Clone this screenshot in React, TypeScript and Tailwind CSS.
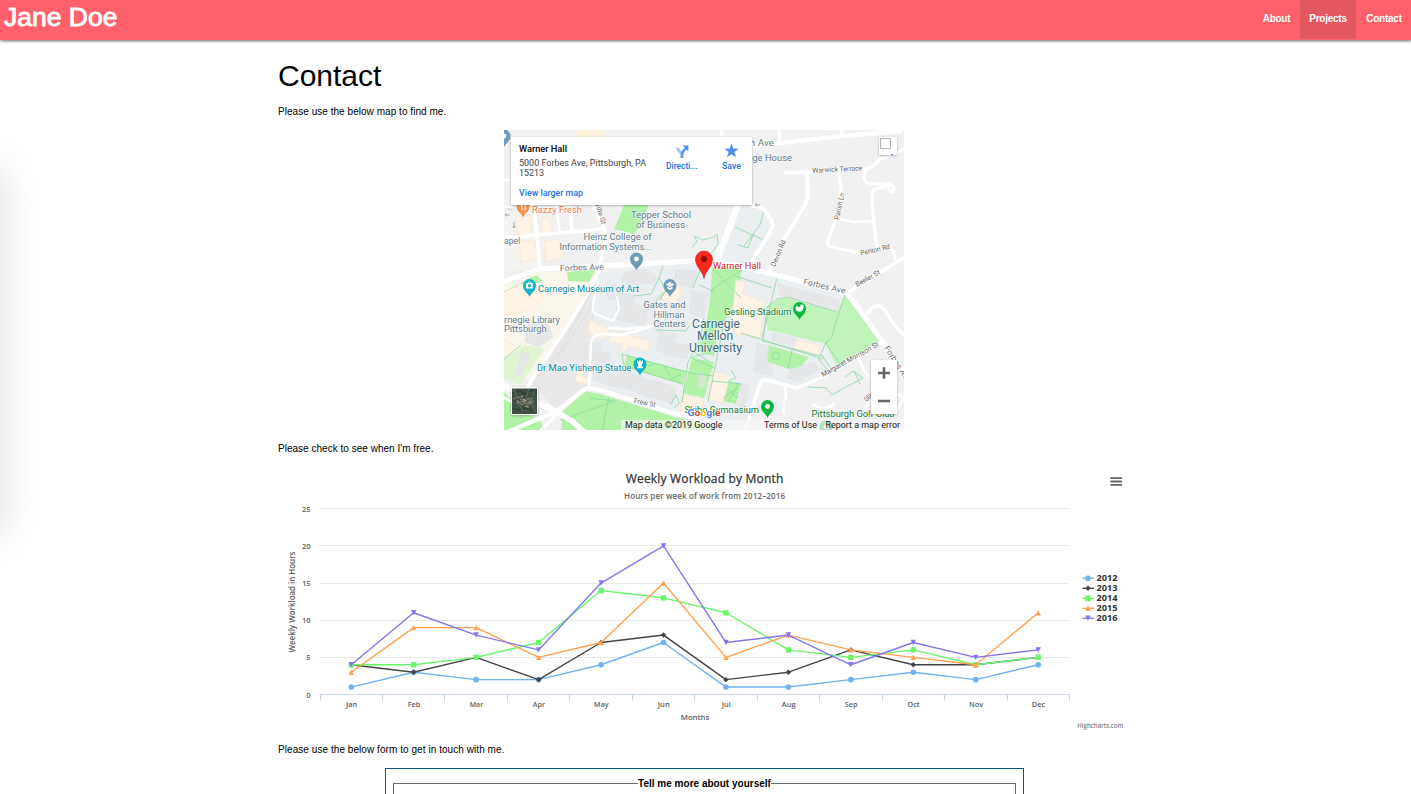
import React from "react";

const MAP_FONT = "Roboto, 'Liberation Sans', sans-serif";
const CHART_FONT = "'Open Sans', 'Noto Sans', sans-serif";

type LabelProps = {
  x: number;
  y: number;
  w: number;
  s?: number;
  fill?: string;
  weight?: number;
  rotate?: number;
  halo?: string;
  children: string;
};

function Label({ x, y, w, s = 9.2, fill = "#5f7c8d", weight = 400, rotate = 0, halo = "#ffffff", children }: LabelProps) {
  return (
    <text
      x={x}
      y={y}
      fontSize={s}
      fill={fill}
      fontWeight={weight}
      fontFamily={MAP_FONT}
      textLength={w}
      lengthAdjust="spacingAndGlyphs"
      transform={rotate ? `rotate(${rotate} ${x} ${y})` : undefined}
      stroke={halo}
      strokeWidth={halo === "none" ? 0 : 1.4}
      strokeOpacity={0.6}
      paintOrder="stroke"
    >
      {children}
    </text>
  );
}

function Pin({ x, y, color, children }: { x: number; y: number; color: string; children?: React.ReactNode }) {
  return (
    <g transform={`translate(${x} ${y})`}>
      <path d="M0 10.5C-.8 7 -6.5 4.5 -6.5 -1A6.5 6.5 0 0 1 6.5 -1C6.5 4.5 .8 7 0 10.5Z" fill={color} />
      {children ?? <circle cx="0" cy="-1" r="2.4" fill="#fff" />}
    </g>
  );
}

const roads: [string, number][] = [
  ["M503 282L539 269L600 266L700 260.5L735 265L780 276L847 293L882 341L905 374", 5],
  ["M847 293L873 277L905 257", 3.8],
  ["M740 147L780 143L843 136L900 131", 4.6],
  ["M843 136L841 129M780 143L779 129M722 137L721 129", 3],
  ["M785 173L867 169Q873 168 880 159L905 149", 3.4],
  ["M807 173L808 194Q808 199 805 205L783 241L770 271", 4],
  ["M838 169L841 189L841 206L828 240Q826 246 832 247L860 253L890 248Q896 252 895 259", 3],
  ["M840 219L855 222L874 221", 2.4],
  ["M877 248L872 206L872 195Q872 189 880 188L888 186", 3],
  ["M868 167Q860 177 867 183L880 184L890 184Q896 187 893 192Q888 192 889 187", 2.8],
  ["M738 205L717 260", 6.4],
  ["M752 206Q761 206 765 211L772 221Q774 226 770 232L760 249Q755 255 752 262", 3.6],
  ["M503 238L605 229M534 206L540 270M570 206L572 231", 3.4],
  ["M503 180L512 180M503 207L512 207M556 206L560 234", 2.6],
  ["M592 204L605 230L605 240L599 271L590 290L567 327L533 378L524 393", 3.6],
  ["M598 280L593 305Q591 313 598 315L613 321L619 309L617 297", 2.2],
  ["M503 385L524 397L557 412L572 421L583 431", 5.5],
  ["M510 431L557 411L585 389Q591 387 600 390L673 413L720 424", 4.2],
  ["M589 387L591 342Q591 337 600 334L621 335L640 330L652 326L627 329L609 328", 2.6],
  ["M745 431L760 383Q761 379 767 380L797 388L825 376L880 343", 3.4],
  ["M785 386L786 397L783 403L784 413", 2.6],
  ["M857 355L867 376M866 315L872 308Q879 303 884 309L894 325L905 336", 3],
  ["M866 408L870 396Q885 389 904 397L895 414M813 404Q824 413 834 404", 2.4],
  ["M540 431L558 413L548 405M503 397L512 402", 3],
];

const greens = [
  "624,205 649,205 635,234 614,229",
  "567,272 596,269 589,282 568,281",
  "503,292 536,275 543,281 512,291 503,300",
  "503,391 512,400 520,411 540,420 545,431 503,431",
  "585,391 600,394 675,417 710,426 712,431 561,431 563,411",
  "712,268 742,268 740,281 731,312 717,330 714,356 698,352 707,318 711,292",
  "692,358 714,362 704,398 683,393",
  "627,355 686,371 683,385 624,366",
  "729,381 741,384 736,404 723,401",
  "768,345 809,357 801,367 790,369 767,362",
];

const creams = [
  "503,293 520,284 536,287 543,296 534,309 512,314 503,315",
  "516,217 530,216 532,234 518,235",
  "541,219 549,217 553,232 543,234",
  "519,242 534,240 538,258 521,262",
  "545,241 558,239 565,257 545,262",
  "590,320 609,329 607,337 600,339 588,332",
  "612,331 651,341 648,351 628,346 626,351 621,349 623,344 608,341",
  "663,287 678,285 682,294 675,304 661,299",
  "577,369 583,371 582,377 590,378 588,384 575,382",
  "736,280 745,282 743,294 765,302 760,338 741,333 740,338 731,326",
  "797,340 820,345 818,354 795,348",
  "713,371 730,376 723,403 708,399",
  "684,395 704,399 701,417 680,411",
  "503,338 515,346 510,354 503,356",
];

const buildings = [
  "625,272 644,269 656,275 655,283 628,285 621,280",
  "616,292 634,296 634,304 648,309 645,326 616,319",
  "606,286 615,284 615,300 608,299",
  "586,343 600,344 602,352 611,354 610,364 584,359",
  "594,363 609,367 607,373 617,377 615,387 593,380",
  "618,370 634,373 646,380 660,382 676,388 673,404 646,396 626,388 616,386",
  "660,332 676,334 674,343 690,345 687,359 668,355 656,350",
  "675,270 697,271 692,288 676,284",
  "691,290 709,294 704,318 690,313",
  "529,321 549,326 553,337 539,347 525,342",
  "522,352 530,355 521,376 515,374",
  "778,284 839,300 837,312 780,296",
  "774,333 795,339 793,346 772,341",
  "757,343 769,347 767,362 773,368 772,376 754,371",
  "790,370 815,362 818,370 799,381 787,378",
  "742,384 750,386 743,408 738,406",
];

function CampusMap() {
  return (
    <svg viewBox="504 130 400 300" className="block h-[300px] w-[400px]" role="img">
      <rect x="504" y="130" width="400" height="300" fill="#f1f1f1" />
      <polygon points="504,284 540,272 596,270 590,289 566,327 531,380 504,377" fill="#fbf6ec" />
      <polygon points="504,215 532,207 545,268 504,270" fill="#f5f3ef" />
      <polygon points="525,345 545,349 520,385 504,378 504,358 512,354" fill="#e2f5d3" />
      <polygon points="596,280 592,302 598,316 591,342 588,387 557,411 532,384 568,326" fill="#e9e9ea" />
      <polygon points="600,272 700,263 720,260 738,208 756,206 770,224 764,252 757,268 845,295 838,345 860,356 797,386 762,379 745,430 715,422 590,388 591,342" fill="#ebeff2" />
      <polygon points="766,316 767,307 777,300 788,297 837,311 845,295 882,341 836,365 826,344 768,330" fill="#bff3b9" />
      {greens.map((p) => (
        <polygon key={p} points={p} fill="#b2f2a7" />
      ))}
      {buildings.map((p) => (
        <polygon key={p} points={p} fill="#e5e7e9" stroke="#dee1e3" strokeWidth=".5" />
      ))}
      {creams.map((p) => (
        <polygon key={p} points={p} fill="#fef3e5" stroke="#f9e3cb" strokeWidth=".6" />
      ))}
      <rect x="698" y="373.500" width="8" height="14" rx="1" fill="#d5e6d0" />
      <rect x="578" y="130" width="26" height="7" fill="#fdf1dc" />
      <g fill="none" stroke="#8bd8a2" strokeWidth=".8">
        <path d="M735 227L764 240M764 210L760 225L744 246M753 235L748 248L738 245" />
        <path d="M694 236L703 240L714 237L717 234L718 244L712 252M692 248L697 241L694 236M700 270L693 288" />
        <path d="M663 266L659 278L651 294L634 296M659 278L666 290L654 303M672 281L660 300" />
        <path d="M712 268L741 298M742 270L714 288L711 292M735 276L772 288M699 285L715 292" />
        <path d="M704 318L700 340L688 362L682 402M725 318L714 372L708 402" />
        <path d="M655 330L686 331L689 326" />
        <path d="M622 354L624 366L683 384M622 354L690 373L714 376M636 358L648 366L655 364M664 367L672 379L681 374" />
        <path d="M766 316L767 307L777 299L788 297M766 316L763 341L820 356L827 340M777 278L762 338M788 297L837 312M845 295L835 325L832 337L826 344L841 365M741 333L817 357M817 357L830 373M823 357L832 370M788 369L792 350" />
        <path d="M712 381L742 384M728 390L738 398M723 398L738 388M728 402L739 383M731 370L736 378L728 381" />
        <path d="M808 387L826 388L832 395L846 387L863 378L853 371L845 377M854 371L860 384" />
        <path d="M512 210L503 206M521 345L503 360M609 397L605 415L603 430M590 398L615 401L560 420M670 405L676 395L679 403L674 408" />
        <path d="M690 358L711 352M692 358L714 368M694 352L710 362" />
      </g>
      <g fill="none" stroke="#8bd8a2" strokeWidth=".8">
        <circle cx="776" cy="356" r="4" />
        <circle cx="821" cy="357" r="2" />
      </g>
      <g fill="none" stroke="#dadadc" strokeWidth=".7">
        <path d="M600 274L592 290L560 352L531 384M596 300L560 355L535 385" />
      </g>
      {roads.map(([d, w]) => (
        <path key={d} d={d} fill="none" stroke="#ffffff" strokeWidth={w} strokeLinejoin="round" strokeLinecap="round" />
      ))}
      <path d="M505 215h5m-5 0l2-1.5m-2 1.5l2 1.5M514 222v6m0 0l-1.500-2m1.500 2l1.500-2M755 205h5m-5 0l2-1.500m-2 1.500l2 1.500" fill="none" stroke="#9a9aa5" strokeWidth=".8" />

      <Pin x={504} y={137} color="#6f9cb3" />
      <Pin x={523} y={207} color="#f5924e">
        <path d="M-2.300 -4.500V-1.500M-1 -4.500V3M-2.300 -1.500H0M2.200 -4.500V3" stroke="#fff" strokeWidth="1" />
      </Pin>
      <Label x={532} y={213} w={50} fill="#ee8147">Razzy Fresh</Label>
      <Label x={631} y={218} w={60}>Tepper School</Label>
      <Label x={636} y={227.5} w={49}>of Business</Label>
      <Label x={583.5} y={240} w={68}>Heinz College of</Label>
      <Label x={559.5} y={249.5} w={92}>Information Systems...</Label>
      <Label x={504} y={244} w={16}>apel</Label>
      <Label x={560} y={271} w={44} s={8} fill="#757575" rotate={-2}>Forbes Ave</Label>
      <Label x={595} y={204} w={22} s={6.8} fill="#777" rotate={72}>ville St</Label>
      <Pin x={636.5} y={260} color="#6f9cb3" />
      <Pin x={529.5} y={286.5} color="#12b5c9">
        <path d="M-3.400 -3.500h6.800v5.500h-6.800z" fill="#fff" />
        <circle cy="-.8" r="1.600" fill="#12b5c9" />
        <path d="M-1.500 -3.300L0 -5.300L1.500 -3.300" stroke="#fff" fill="none" strokeWidth=".7" />
      </Pin>
      <Label x={538} y={292} w={101} fill="#068b9e">Carnegie Museum of Art</Label>
      <Pin x={670} y={286.5} color="#6f9cb3">
        <path d="M0 -4.500L4.500 -2L0 .5L-4.500 -2ZM-2.600 0L0 1.500L2.600 0V2L0 3.500L-2.600 2Z" fill="#fff" />
      </Pin>
      <Label x={643.5} y={308} w={42}>Gates and</Label>
      <Label x={653.5} y={317.5} w={31}>Hillman</Label>
      <Label x={653.5} y={327} w={32}>Centers</Label>
      <Label x={504} y={323} w={56}>rnegie Library</Label>
      <Label x={504} y={332} w={42.5}>Pittsburgh</Label>
      <Label x={692} y={328} w={48} s={12} fill="#41697f">Carnegie</Label>
      <Label x={697} y={340} w={36} s={12} fill="#41697f">Mellon</Label>
      <Label x={689} y={352} w={53} s={12} fill="#41697f">University</Label>
      <Label x={537} y={371} w={94.5} fill="#068b9e">Dr Mao Yisheng Statue</Label>
      <Pin x={640} y={365} color="#12b5c9">
        <path d="M-3 -4.500h1.300v1h1v-1h1.400v1h1v-1H3v3H2V2h1v1.300h-6V2h1v-3.500h-1Z" fill="#fff" />
      </Pin>
      <Label x={633.5} y={403} w={22} s={7.2} fill="#6f6f6f" rotate={11}>Frew St</Label>
      <Label x={741} y={146} w={33} fill="#6f7b83">5th Ave</Label>
      <Label x={747} y={160.5} w={45}>dge House</Label>
      <Label x={812.5} y={173} w={50} s={7} fill="#5f5f5f" rotate={-3}>Warwick Terrace</Label>
      <Label x={839} y={220} w={27} s={7} fill="#5f5f5f" rotate={-78}>Parish Ln</Label>
      <Label x={861} y={255.5} w={30} s={7} fill="#5f5f5f" rotate={-13}>Penton Rd</Label>
      <Label x={775} y={267} w={28} s={7} fill="#5f5f5f" rotate={-67}>Devon Rd</Label>
      <Label x={857} y={287} w={27} s={7} fill="#5f5f5f" rotate={-29}>Beeler St</Label>
      <Label x={803} y={284} w={43} s={8} fill="#757575" rotate={13}>Forbes Ave</Label>
      <Label x={884} y={348} w={42} s={8} fill="#757575" rotate={57}>Forbes Ave</Label>
      <Label x={823} y={377} w={64} s={7} fill="#5f5f5f" rotate={-29}>Margaret Morrison St</Label>
      <Label x={867} y={402} w={25} s={7} fill="#5f5f5f" rotate={-48}>Gladstone</Label>
      <Label x={724} y={315} w={67.5} fill="#0c7f38">Gesling Stadium</Label>
      <Pin x={799.5} y={309.5} color="#10b642">
        <path d="M-4 -1.800L-2.500 -4L-.8 -2L1 -3V-5L4 -4.500V-1.500Q3 2.200 0 2.300Q-3.500 2 -4 -1.800Z" fill="#fff" />
      </Pin>
      <Label x={684.5} y={412.5} w={74.5} fill="#0c7f38">Skibo Gymnasium</Label>
      <Pin x={767.5} y={407.5} color="#10b642" />
      <Label x={811.5} y={417} w={83} fill="#0c7f38">Pittsburgh Golf Club</Label>
      <Pin x={826} y={428} color="#10b642" />
      <path d="M704 278.500C703 271 695.500 267 695.500 259.500A8.500 8.500 0 0 1 712.500 259.500C712.500 267 705 271 704 278.500Z" fill="#fb2b1b" stroke="#c71a12" strokeWidth=".6" />
      <circle cx="704" cy="259" r="3" fill="#8a0b0b" />
      <Label x={713} y={268.5} w={48} fill="#d8231f">Warner Hall</Label>

      <g fontFamily={MAP_FONT} fontSize="9.500" fontWeight="700" stroke="#fff" strokeWidth="1.200" paintOrder="stroke">
        <text x="687.500" y="415.500" textLength="33" lengthAdjust="spacingAndGlyphs">
          <tspan fill="#4285f4">G</tspan>
          <tspan fill="#ea4335">o</tspan>
          <tspan fill="#fbbc05">o</tspan>
          <tspan fill="#4285f4">g</tspan>
          <tspan fill="#34a853">l</tspan>
          <tspan fill="#ea4335">e</tspan>
        </text>
      </g>
      <rect x="621" y="420" width="283" height="10" fill="#f5f5f5" fillOpacity=".72" />
      <Label x={625} y={428} w={97.5} fill="#222" halo="none">Map data ©2019 Google</Label>
      <Label x={764} y={428} w={53} fill="#222" halo="none">Terms of Use</Label>
      <Label x={825.5} y={428} w={74.5} fill="#222" halo="none">Report a map error</Label>

      <g filter="url(#soft)">
        <rect x="511" y="137" width="241" height="68" rx="1" fill="#fff" />
        <rect x="879" y="137" width="18" height="18" rx="1" fill="#fff" />
        <rect x="871" y="360" width="26" height="54" rx="1" fill="#fff" />
        <rect x="511" y="387" width="27" height="28" fill="#fff" />
      </g>
      <Label x={519} y={152} w={48} fill="#000" halo="none" weight={500}>Warner Hall</Label>
      <Label x={519} y={166} w={127} fill="#444" halo="none">5000 Forbes Ave, Pittsburgh, PA</Label>
      <Label x={519} y={176} w={25} fill="#444" halo="none">15213</Label>
      <Label x={519} y={196} w={64} fill="#1a73e8" halo="none" weight={500}>View larger map</Label>
      <Label x={666} y={169} w={31.5} fill="#1a73e8" halo="none" weight={500}>Directi...</Label>
      <Label x={722} y={169} w={19} fill="#1a73e8" halo="none" weight={500}>Save</Label>
      <g fill="none" strokeWidth="2.800">
        <path d="M677.500 147.500Q678.500 151.500 682 153.500" stroke="#9cc0f6" />
        <path d="M682 158V154.500Q682 151.500 686 148.500" stroke="#5c9cf0" />
      </g>
      <path d="M682.500 145.500H688.300V151.500Z" fill="#4b90ee" />
      <path d="M731.500 143.500L733.300 148.600L738.700 148.700L734.400 152L736 157.200L731.500 154.100L727 157.200L728.600 152L724.300 148.700L729.700 148.600Z" fill="#4b8ff0" />
      <rect x="880.500" y="138.500" width="10" height="10" fill="#fff" stroke="#b5b5b5" />
      <path d="M891 154h2v1.200h-2z" fill="#4b90ee" />
      <path d="M884 367.300V378.700M878 373H890M878 401H890" stroke="#666" strokeWidth="2.600" />

      <rect x="512" y="388.500" width="25" height="25.500" fill="#414e44" />
      <g strokeWidth="1.300" fill="none">
        <path d="M512 393l8-2 5 3 7-4 5 3M513 408l6 2 7-2 9 4" stroke="#2b4234" />
        <path d="M513 399l6-2 4 4 7-3 4 4M516 404l7-3 5 4 5-2M517 401l5 4 6-6 5 5" stroke="#7f7b69" />
        <path d="M514 390l3 7 1 6 5 8M529 389l-3 9 3 10M534 391l-2 12 3 9" stroke="#56695a" />
        <path d="M523 399l3 2M528 403l3-1M517 401l2 1M521 396l2 1M525 406l3 1" stroke="#b7a58e" />
      </g>
      <defs>
        <filter id="soft" x="-10%" y="-10%" width="120%" height="120%">
          <feDropShadow dx="0" dy=".7" stdDeviation=".9" floodColor="#000" floodOpacity=".3" />
        </filter>
      </defs>
    </svg>
  );
}

type Shape = "circle" | "diamond" | "square" | "triangle" | "triangle-down";

const series: { name: string; color: string; shape: Shape; data: number[] }[] = [
  { name: "2012", color: "#73b1ef", shape: "circle", data: [1, 3, 2, 2, 4, 7, 1, 1, 2, 3, 2, 4] },
  { name: "2013", color: "#434348", shape: "diamond", data: [4, 3, 5, 2, 7, 8, 2, 3, 6, 4, 4, 5] },
  { name: "2014", color: "#6bf56b", shape: "square", data: [4, 4, 5, 7, 14, 13, 11, 6, 5, 6, 4, 5] },
  { name: "2015", color: "#ffa04f", shape: "triangle", data: [3, 9, 9, 5, 7, 15, 5, 8, 6, 5, 4, 11] },
  { name: "2016", color: "#8278ee", shape: "triangle-down", data: [4, 11, 8, 6, 15, 20, 7, 8, 4, 7, 5, 6] },
];

const months: [string, number][] = [
  ["Jan", 11], ["Feb", 12.5], ["Mar", 13.5], ["Apr", 12.5], ["May", 14.5], ["Jun", 12],
  ["Jul", 9], ["Aug", 14], ["Sep", 13], ["Oct", 12], ["Nov", 14], ["Dec", 13.5],
];

const px = (i: number) => 351.25 + i * 62.45;
const py = (v: number) => 694.5 - v * 7.43;

function Marker({ shape, x, y, color }: { shape: Shape; x: number; y: number; color: string }) {
  if (shape === "circle") return <circle cx={x} cy={y} r="2.800" fill={color} />;
  const r = 2.7;
  const d = {
    diamond: `M${x} ${y - r}L${x + r} ${y}L${x} ${y + r}L${x - r} ${y}Z`,
    square: `M${x - r} ${y - r}H${x + r}V${y + r}H${x - r}Z`,
    triangle: `M${x} ${y - r}L${x + r} ${y + r}H${x - r}Z`,
    "triangle-down": `M${x - r} ${y - r}H${x + r}L${x} ${y + r}Z`,
  }[shape];
  return <path d={d} fill={color} />;
}

function WorkloadChart() {
  return (
    <svg viewBox="278 462 856 276" className="block h-[276px] w-[856px]" fontFamily={CHART_FONT}>
      <text x="704.500" y="483" fontSize="12" fill="#333" stroke="#333" strokeWidth=".25" textAnchor="middle" textLength="157.500">
        Weekly Workload by Month
      </text>
      <text x="704.500" y="499" fontSize="8" fontWeight="600" fill="#666" textAnchor="middle" textLength="161">
        Hours per week of work from 2012–2016
      </text>
      {[5, 10, 15, 20, 25].map((v) => (
        <path key={v} d={`M320 ${Math.floor(py(v)) + 0.5}H1069.500`} stroke="#e9e9e9" />
      ))}
      {[0, 5, 10, 15, 20, 25].map((v) => (
        <text key={v} x="310.500" y={py(v) + 3.1} fontSize="7.500" fontWeight="600" fill="#606060" textAnchor="end">
          {v}
        </text>
      ))}
      <path d="M320 694.500H1070" stroke="#ccd6eb" />
      {Array.from({ length: 13 }, (_, i) => (
        <path key={i} d={`M${Math.floor(320 + i * 62.46) + 0.5} 694V700.500`} stroke="#ccd6eb" />
      ))}
      {months.map(([m, w], i) => (
        <text key={m} x={px(i) + 0.3} y="707" fontSize="7.400" fontWeight="600" fill="#606060" textAnchor="middle" textLength={w} lengthAdjust="spacingAndGlyphs">
          {m}
        </text>
      ))}
      <text x="695" y="720" fontSize="7.800" fontWeight="600" fill="#606060" textAnchor="middle" textLength="28.500">Months</text>
      <text x="295" y="602" fontSize="8" fontWeight="600" fill="#606060" textAnchor="middle" textLength="101" transform="rotate(-90 295 602)">
        Weekly Workload in Hours
      </text>
      {series.map((s) => (
        <g key={s.name}>
          <polyline
            points={s.data.map((v, i) => `${px(i)},${py(v)}`).join(" ")}
            fill="none"
            stroke={s.color}
            strokeWidth="1.400"
            strokeLinejoin="round"
          />
          {s.data.map((v, i) => (
            <Marker key={i} shape={s.shape} x={px(i)} y={py(v)} color={s.color} />
          ))}
        </g>
      ))}
      {series.map((s, i) => (
        <g key={s.name}>
          <path d={`M1082.500 ${578.3 + i * 10}H1094`} stroke={s.color} strokeWidth="1.400" />
          <Marker shape={s.shape} x={1088} y={578.3 + i * 10} color={s.color} />
          <text x="1096.500" y={581.3 + i * 10} fontSize="8.200" fontWeight="700" fill="#333" textLength="21" lengthAdjust="spacingAndGlyphs">
            {s.name}
          </text>
        </g>
      ))}
      <path d="M1111 478.200H1121.300M1111 481.500H1121.300M1111 484.800H1121.300" stroke="#666" strokeWidth="1.800" strokeLinecap="round" />
      <text x="1123.300" y="728" fontSize="6.200" fontWeight="600" fill="#808080" textAnchor="end" textLength="46" lengthAdjust="spacingAndGlyphs">
        Highcharts.com
      </text>
    </svg>
  );
}

export default function App() {
  return (
    <div className="relative flex h-[794px] flex-col overflow-hidden bg-white font-['Liberation_Sans',Arial,sans-serif] text-black">
      <header className="z-10 flex h-10 shrink-0 items-start justify-between bg-[#ff616b] shadow-[0_1px_3px_rgba(0,0,0,0.6)]">
        <a className="pl-[4px] pt-[2px] text-[26.500px] leading-[31px] text-white [-webkit-text-stroke:0.850px_white]">Jane Doe</a>
        <nav className="flex h-[39px] text-[10px] font-bold leading-[38px] tracking-[-0.250px] text-white">
          <a className="w-[47px] text-center">About</a>
          <a className="w-14 bg-[#e4575f] text-center">Projects</a>
          <a className="w-[55px] pl-px text-center">Contact</a>
        </nav>
      </header>
      <aside className="absolute left-[-200px] top-[168px] h-[367px] w-[200px] shadow-[0_0_42px_rgba(0,0,0,0.14)]" />
      <main className="ml-[278px] flex w-[856px] flex-col pt-[18px]">
        <h1 className="text-[30px] leading-[36px]">Contact</h1>
        <p className="mt-[11px] text-[10px] leading-[14px] tracking-[0.040px]">Please use the below map to find me.</p>
        <div className="mt-[11px] pl-[226px]">
          <CampusMap />
        </div>
        <p className="mt-3 text-[10px] leading-[14px] tracking-[0.020px]">Please check to see when I'm free.</p>
        <div className="mt-[6px]">
          <WorkloadChart />
        </div>
        <p className="mt-[5px] text-[10px] leading-[14px] tracking-[0.060px]">Please use the below form to get in touch with me.</p>
        <form className="ml-[107px] mt-[11px] h-[60px] w-[639px] border border-[#00598c] px-[7px] pt-[8px]">
          <div className="flex h-[14px] items-center text-[10px] font-bold leading-[14px]">
            <span className="mb-px h-px flex-1 bg-[#696969]" />
            <span className="w-[133px] whitespace-nowrap text-center tracking-[0.010px]">Tell me more about yourself</span>
            <span className="mb-px h-px flex-1 bg-[#696969]" />
          </div>
          <div className="mt-[-8px] h-12 border-x border-[#696969]" />
        </form>
      </main>
    </div>
  );
}
